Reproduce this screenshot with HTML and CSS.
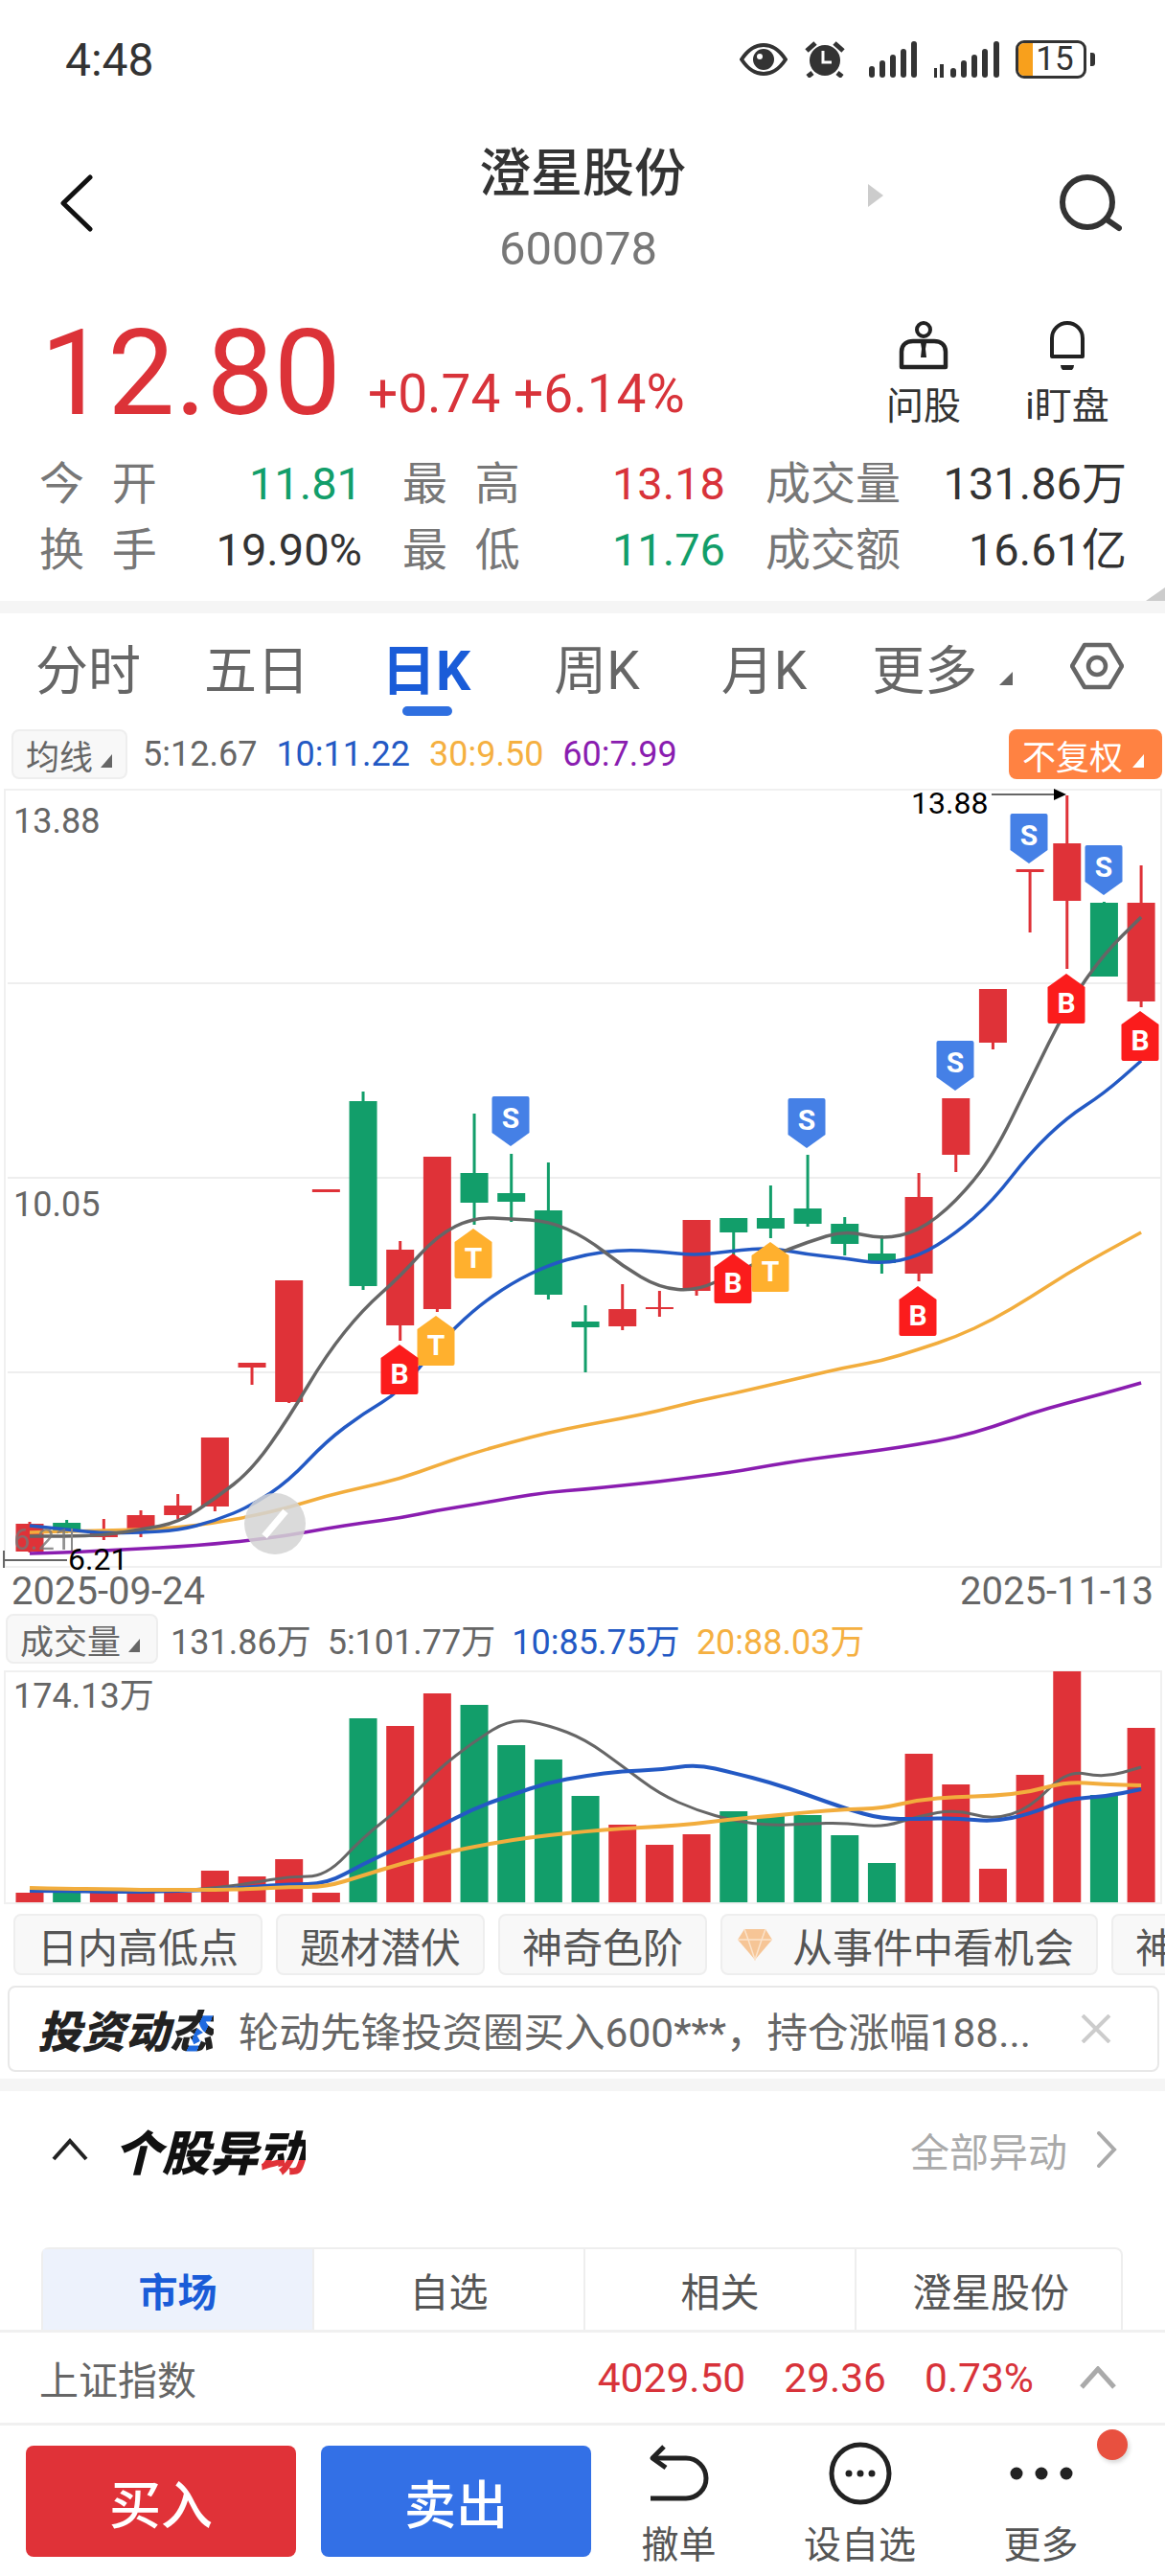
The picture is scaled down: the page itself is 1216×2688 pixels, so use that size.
FILE: index.html
```html
<!DOCTYPE html>
<html>
<head>
    <title>澄星股份 600078</title>
    <link rel="stylesheet" href="styles.css">
</head>
<body>
<div class="screen">
    <div class="status-bar">
        <span class="clock">4:48</span>
        <div class="status-icons">
            <svg width="50" height="34" viewBox="0 0 50 34"><path d="M2 17C10 5 17 2 25 2s15 3 23 15c-8 12-15 15-23 15S10 29 2 17z" fill="none" stroke="#333" stroke-width="4"/><circle cx="25" cy="17" r="11" fill="#333"/><circle cx="21" cy="14" r="3" fill="#fff"/></svg>
            <svg class="alarm" width="42" height="38" viewBox="0 0 42 38"><circle cx="21" cy="20" r="16" fill="#333"/><path d="M19 10v12h9" fill="none" stroke="#fff" stroke-width="3"/><path d="M2 10l9-8M40 10l-9-8M8 33l-5 4M34 33l5 4" stroke="#333" stroke-width="5"/></svg>
            <svg class="signal" width="50" height="38" viewBox="0 0 50 38"><g fill="#333"><rect x="0" y="26" width="6" height="12" rx="3"/><rect x="11" y="20" width="6" height="18" rx="3"/><rect x="22" y="14" width="6" height="24" rx="3"/><rect x="33" y="8" width="6" height="30" rx="3"/><rect x="44" y="0" width="6" height="38" rx="3"/></g></svg>
            <svg class="signal" width="68" height="38" viewBox="0 0 68 38"><g fill="#333"><rect x="0" y="28" width="3" height="10"/><rect x="6" y="24" width="4" height="14"/><rect x="17" y="28" width="6" height="10" rx="3"/><rect x="28" y="20" width="6" height="18" rx="3"/><rect x="39" y="14" width="6" height="24" rx="3"/><rect x="50" y="8" width="6" height="30" rx="3"/><rect x="62" y="0" width="6" height="38" rx="3"/></g></svg>
            <div class="battery"><span class="battery-level"></span><span class="battery-num">15</span></div>
            <span class="battery-nub"></span>
        </div>
    </div>

    <div class="stock-header">
        <svg class="back-icon" width="35" height="60" viewBox="0 0 35 60"><path d="M32 3L4 30l28 27" fill="none" stroke="#111" stroke-width="5" stroke-linecap="round" stroke-linejoin="round"/></svg>
        <div class="stock-title">
            <div class="stock-name">澄星股份</div>
            <div class="stock-code">600078</div>
        </div>
        <div class="header-right">
            <span class="next-arrow"></span>
            <svg class="search-icon" width="66" height="60" viewBox="0 0 66 60"><circle cx="30" cy="29" r="26" fill="none" stroke="#333" stroke-width="6"/><path d="M50 47l13 9" stroke="#333" stroke-width="6" stroke-linecap="round"/></svg>
        </div>
    </div>

    <div class="quote">
        <div class="price">12.80</div>
        <div class="change">+0.74 +6.14%</div>
        <div class="quote-actions">
            <div class="quote-action">
                <svg width="52" height="51" viewBox="0 0 52 51"><circle cx="26" cy="9" r="7" fill="none" stroke="#222" stroke-width="4"/><path d="M3 48V32c0-8 6-11 12-11h22c6 0 12 3 12 11v16z" fill="none" stroke="#222" stroke-width="4.5" stroke-linejoin="round"/><path d="M3 46h46v4H3z" fill="#222"/><path d="M23 23h6l-1 6 1 9h-6l1-9z" fill="#222"/></svg>
                <span>问股</span>
            </div>
            <div class="quote-action">
                <svg width="40" height="51" viewBox="0 0 40 51"><path d="M4 37V18a16 16 0 0 1 32 0v19z" fill="none" stroke="#222" stroke-width="4" stroke-linejoin="round"/><path d="M13 46a7 7 0 0 0 14 0z" fill="#222"/></svg>
                <span>i盯盘</span>
            </div>
        </div>
    </div>

    <div class="stats">
        <div class="stat"><span class="stat-label">今 开</span><span class="green">11.81</span></div>
        <div class="stat"><span class="stat-label">最 高</span><span class="red">13.18</span></div>
        <div class="stat"><span class="stat-label">成交量</span><span>131.86万</span></div>
        <div class="stat"><span class="stat-label">换 手</span><span>19.90%</span></div>
        <div class="stat"><span class="stat-label">最 低</span><span class="green">11.76</span></div>
        <div class="stat"><span class="stat-label">成交额</span><span>16.61亿</span></div>
        <span class="corner-mark"></span>
    </div>
    <div class="band"></div>

    <div class="period-tabs">
        <span class="period">分时</span>
        <span class="period period-five">五日</span>
        <span class="period period-active">日K</span>
        <span class="period">周K</span>
        <span class="period">月K</span>
        <span class="period period-more">更多</span>
        <span class="more-arrow"></span>
        <svg class="hex-icon" width="56" height="50" viewBox="0 0 56 50"><path d="M15 3h26l13 22-13 22H15L2 25z" fill="none" stroke="#666" stroke-width="4.500" stroke-linejoin="round"/><circle cx="28" cy="25" r="9" fill="none" stroke="#666" stroke-width="4.500"/></svg>
    </div>

    <div class="legend-row">
        <div class="legend-box ma-box">均线<i class="tri"></i></div>
        <span>5:12.67</span>
        <span class="blue">10:11.22</span>
        <span class="orange">30:9.50</span>
        <span class="purple">60:7.99</span>
        <div class="adjust-btn">不复权<i class="tri tri-white"></i></div>
    </div>

    <svg class="chart-svg" width="1216" height="813" viewBox="0 823 1216 813">
        <g id="kGrid"></g>
        <text class="axis-text" x="14" y="869">13.88</text>
        <text class="axis-text" x="14" y="1269">10.05</text>
        <g id="kCandles"></g>
        <g id="kLines"></g>
        <g id="kMarkers"></g>
        <circle cx="287" cy="1590" r="32" fill="#d4d4d4" opacity="0.85"/>
        <path d="M276 1603l22-26" stroke="#fff" stroke-width="7"/>
        <text class="ghost-text" x="14" y="1617">6.21</text>
        <path d="M75 1595v23" stroke="#888" stroke-width="2"/>
        <path d="M4 1628h66M4 1618v18" stroke="#666" stroke-width="2"/>
        <text class="mark-text" x="71" y="1638">6.21</text>
        <text class="mark-text" x="951" y="849">13.88</text>
        <path d="M1035 829h66" stroke="#666" stroke-width="2"/>
        <path d="M1100 823l13 6-13 6z" fill="#000"/>
    </svg>

    <div class="date-row"><span>2025-09-24</span><span>2025-11-13</span></div>

    <div class="legend-row vol-legend">
        <div class="legend-box vol-box">成交量<i class="tri"></i></div>
        <span>131.86万</span>
        <span>5:101.77万</span>
        <span class="blue">10:85.75万</span>
        <span class="orange">20:88.03万</span>
    </div>

    <svg class="vol-svg" width="1216" height="244" viewBox="0 1743 1216 244">
        <rect x="5" y="1744" width="1207" height="242" fill="none" stroke="#f0f0f0" stroke-width="2"/>
        <g id="volBars"></g>
        <g id="volLines"></g>
        <text class="axis-text" x="14" y="1782">174.13万</text>
    </svg>

    <div class="chips">
        <span class="chip">日内高低点</span>
        <span class="chip">题材潜伏</span>
        <span class="chip">神奇色阶</span>
        <span class="chip">
            <svg width="38" height="34" viewBox="0 0 38 34"><path d="M8 1h22l7 11-18 21L1 12z" fill="#f6c596"/><path d="M1 12h36M12 12l7 21 7-21M8 1l4 11M30 1l-4 11" fill="none" stroke="#fbe3cb" stroke-width="1.5"/></svg>
            从事件中看机会
        </span>
        <span class="chip">神奇九转</span>
    </div>

    <div class="news">
        <span class="news-logo">投资动<span class="accent-blue">态</span></span>
        <span class="news-text">轮动先锋投资圈买入600***，持仓涨幅188...</span>
        <svg class="news-close" width="32" height="30" viewBox="0 0 32 30"><path d="M2 1l28 28M30 1L2 29" stroke="#ccc" stroke-width="4"/></svg>
    </div>
    <div class="band band-thin"></div>

    <div class="section-head">
        <svg width="38" height="24" viewBox="0 0 38 24"><path d="M2 22L19 3l17 19" fill="none" stroke="#222" stroke-width="4"/></svg>
        <span class="section-title">个股异<span class="accent-red">动</span></span>
        <span class="section-link">全部异动</span>
        <svg width="22" height="38" viewBox="0 0 22 38"><path d="M3 2l16 17L3 36" fill="none" stroke="#aaa" stroke-width="4" stroke-linecap="round"/></svg>
    </div>

    <div class="news-tabs">
        <span class="news-tab news-tab-active">市场</span>
        <span class="news-tab">自选</span>
        <span class="news-tab">相关</span>
        <span class="news-tab">澄星股份</span>
    </div>

    <div class="index-row">
        <span class="index-name">上证指数</span>
        <span class="red index-val">4029.50</span>
        <span class="red index-val">29.36</span>
        <span class="red index-val">0.73%</span>
        <svg width="38" height="24" viewBox="0 0 38 24"><path d="M2 22L19 3l17 19" fill="none" stroke="#aaa" stroke-width="5"/></svg>
    </div>

    <div class="bottom-bar">
        <div class="trade-btn buy-btn">买入</div>
        <div class="trade-btn sell-btn">卖出</div>
        <div class="bar-actions">
            <div class="bar-action">
                <svg width="64" height="60" viewBox="0 0 64 60"><path d="M16 2L4 14l14 10" fill="none" stroke="#222" stroke-width="5" stroke-linejoin="round"/><path d="M5 14h34a20 20 0 0 1 0 42H2" fill="none" stroke="#222" stroke-width="5"/></svg>
                <span>撤单</span>
            </div>
            <div class="bar-action">
                <svg width="66" height="66" viewBox="0 0 66 66"><circle cx="33" cy="33" r="30" fill="none" stroke="#222" stroke-width="5"/><circle cx="21" cy="33" r="3.5" fill="#222"/><circle cx="33" cy="33" r="3.5" fill="#222"/><circle cx="45" cy="33" r="3.5" fill="#222"/></svg>
                <span>设自选</span>
            </div>
            <div class="bar-action">
                <svg width="66" height="66" viewBox="0 0 66 66"><circle cx="7" cy="33" r="6.5" fill="#222"/><circle cx="33" cy="33" r="6.5" fill="#222"/><circle cx="59" cy="33" r="6.5" fill="#222"/></svg>
                <span>更多</span>
                <i class="red-dot"></i>
            </div>
        </div>
    </div>
</div>
<script src="chart.js"></script>
</body>
</html>
```

FILE: styles.css
```css
* {
    box-sizing: border-box;
}

body {
    margin: 0;
    background-color: #ffffff;
    font-family: Roboto, "Noto Sans CJK SC", sans-serif;
    color: #333;
}

.screen {
    width: 1216px;
    height: 2688px;
    overflow: hidden;
}

.red { color: #d8333a; }
.green { color: #129e6a; }
.blue { color: #2359c4; }
.orange { color: #f5b041; }
.purple { color: #8a1db0; }

/* status bar */
.status-bar {
    height: 124px;
    padding: 0 73px 0 68px;
    display: flex;
    align-items: center;
    justify-content: space-between;
}

.clock {
    font-size: 48px;
}

.status-icons {
    display: flex;
    align-items: center;
}

.status-icons svg {
    margin-right: 18px;
}

.status-icons .alarm {
    margin-right: 25px;
}

.battery {
    width: 74px;
    height: 40px;
    border: 3px solid #333;
    border-radius: 9px;
    position: relative;
    text-align: center;
    line-height: 34px;
    font-size: 35px;
    overflow: hidden;
    margin-left: -1px;
}

.battery-level {
    position: absolute;
    left: 0;
    top: 0;
    bottom: 0;
    width: 15px;
    background-color: #f8a01c;
}

.battery-num {
    position: relative;
    margin-left: 8px;
}

.battery-nub {
    width: 5px;
    height: 14px;
    background-color: #333;
    margin-left: 4px;
    border-radius: 0 3px 3px 0;
}

/* stock header */
.stock-header {
    height: 196px;
    padding: 0 45px;
    display: grid;
    grid-template-columns: 1fr 300px 1fr;
}

.back-icon {
    margin: 58px 0 0 17px;
}

.stock-title {
    padding-top: 28px;
    text-align: center;
}

.stock-name {
    font-size: 54px;
    line-height: 60px;
    font-weight: 500;
}

.stock-code {
    margin: 20px 9px 0 0;
    font-size: 49px;
    line-height: 56px;
    color: #777;
}

.header-right {
    position: relative;
    display: flex;
    align-items: flex-start;
    justify-content: flex-end;
    padding-top: 58px;
}

.next-arrow {
    position: absolute;
    left: 148px;
    top: 68px;
    border-left: 16px solid #ccc;
    border-top: 12px solid transparent;
    border-bottom: 12px solid transparent;
}

/* quote */
.quote {
    height: 150px;
    padding: 0 42px 0 42px;
    display: flex;
}

.price {
    font-size: 125px;
    line-height: 140px;
    color: #dc3238;
    height: 140px;
}

.change {
    margin: 63px 0 0 28px;
    font-size: 55px;
    line-height: 56px;
    color: #d8333a;
}

.quote-actions {
    margin-left: auto;
    display: flex;
    gap: 30px;
    padding-top: 15px;
}

.quote-action {
    width: 120px;
    display: flex;
    flex-direction: column;
    align-items: center;
}

.quote-action span {
    margin-top: 16px;
    font-size: 39px;
    line-height: 44px;
}

/* stats */
.stats {
    position: relative;
    height: 157px;
    padding-left: 41px;
    display: grid;
    grid-template-columns: 337px 337px 377px;
    grid-auto-rows: 69px;
    column-gap: 42px;
    font-size: 47px;
    line-height: 69px;
}

.stat {
    display: flex;
    justify-content: space-between;
}

.stat-label {
    color: #777;
    font-size: 47px;
    word-spacing: 17px;
}

.corner-mark {
    position: absolute;
    right: 0;
    bottom: 0;
    border-right: 20px solid #ccc;
    border-top: 14px solid transparent;
}

.band {
    height: 13px;
    background-color: #f5f5f5;
}

/* period tabs */
.period-tabs {
    height: 121px;
    padding: 0 41px 11px 37px;
    display: flex;
    gap: 85px;
    align-items: center;
    position: relative;
    font-size: 55px;
    color: #666;
    white-space: nowrap;
}

.period {
    flex-shrink: 0;
}

.period-five {
    margin-left: -19px;
}

.period-more {
    margin-left: -17px;
}

.period-active {
    position: relative;
    margin: 0 2px 0 -10px;
    font-size: 57px;
    color: #1a5cd8;
    font-weight: 700;
}

.period-active::after {
    content: "";
    position: absolute;
    left: 22px;
    bottom: -11px;
    width: 52px;
    height: 10px;
    border-radius: 5px;
    background-color: #2f6fe0;
}

.more-arrow {
    margin-left: -62px;
    margin-top: 26px;
    border-right: 14px solid #666;
    border-top: 14px solid transparent;
}

.hex-icon {
    flex-shrink: 0;
    margin-left: -25px;
}

/* legend rows */
.legend-row {
    height: 52px;
    padding: 0 3px 0 12px;
    display: flex;
    align-items: center;
    gap: 20px;
    font-size: 36px;
    color: #666;
}

.legend-box {
    height: 52px;
    display: flex;
    align-items: center;
    gap: 8px;
    padding-left: 13px;
    background-color: #f8f8f8;
    border: 2px solid #eee;
    border-radius: 8px;
    font-size: 35px;
    margin-right: -4px;
}

.ma-box {
    width: 121px;
}

.vol-legend {
    padding-left: 6px;
    gap: 17px;
}

.vol-box {
    width: 159px;
}

.tri {
    border-right: 12px solid #666;
    border-top: 14px solid transparent;
    margin-top: 14px;
}

.tri-white {
    border-right-color: #fff;
}

.adjust-btn {
    margin-left: auto;
    width: 160px;
    height: 52px;
    padding-left: 14px;
    display: flex;
    align-items: center;
    gap: 10px;
    background-color: #ff8242;
    border-radius: 8px;
    color: #fff;
    font-size: 35px;
}

.chart-svg {
    display: block;
    margin-top: 10px;
    overflow: visible;
}

.vol-svg {
    display: block;
    margin-top: 7px;
}

.axis-text {
    font-size: 36px;
    fill: #666;
}

.mark-text {
    font-size: 32px;
    fill: #000;
}

.ghost-text {
    font-size: 31px;
    fill: #777;
    opacity: 0.8;
}

.marker-text {
    font-size: 30px;
    font-weight: 700;
    fill: #fff;
    text-anchor: middle;
}

.date-row {
    height: 48px;
    padding: 0 12px;
    display: flex;
    justify-content: space-between;
    align-items: center;
    font-size: 40px;
    color: #666;
}

/* chips */
.chips {
    margin-top: 10px;
    padding-left: 14px;
    display: flex;
    gap: 14px;
    overflow: hidden;
    white-space: nowrap;
}

.chip {
    height: 64px;
    padding: 0 23px;
    display: flex;
    flex-shrink: 0;
    align-items: center;
    gap: 20px;
    background-color: #f8f8f8;
    border: 2px solid #eee;
    border-radius: 8px;
    font-size: 42px;
    color: #555;
}

.chip svg {
    margin-left: -8px;
}

/* news strip */
.news {
    margin: 11px 6px 0 8px;
    height: 90px;
    padding: 0 48px 0 29px;
    display: flex;
    align-items: center;
    border: 2px solid #e8e8e8;
    border-radius: 8px;
}

.news-logo {
    font-size: 46px;
    font-weight: 900;
    font-style: italic;
    color: #222;
    white-space: nowrap;
}

.accent-blue {
    background: linear-gradient(115deg, #222 55%, #1f6ae0 55%, #1f6ae0 70%, #222 70%);
    -webkit-background-clip: text;
    color: transparent;
}

.accent-red {
    background: linear-gradient(180deg, #111 60%, #e03238 60%);
    -webkit-background-clip: text;
    color: transparent;
}

.news-text {
    margin-left: 26px;
    font-size: 42.5px;
    color: #666;
    white-space: nowrap;
}

.news-close {
    margin-left: auto;
}

.band-thin {
    margin-top: 7px;
}

/* section */
.section-head {
    height: 128px;
    padding: 0 50px 6px 54px;
    display: flex;
    align-items: center;
}

.section-title {
    margin-left: 27px;
    font-size: 50px;
    font-weight: 900;
    font-style: italic;
    color: #111;
}

.section-link {
    margin-left: auto;
    margin-right: 30px;
    font-size: 41px;
    color: #aaa;
}

.news-tabs {
    margin: 35px 44px 0 43px;
    height: 86px;
    display: grid;
    grid-template-columns: 281px 283px 283px 282px;
    border: 2px solid #eee;
    border-bottom: none;
    border-radius: 8px 8px 0 0;
}

.news-tab {
    display: flex;
    align-items: center;
    justify-content: center;
    font-size: 41px;
    color: #555;
    border-left: 2px solid #eee;
}

.news-tab-active {
    border-left: none;
    background-color: #edf2fc;
    color: #1a5cd8;
    font-weight: 700;
}

/* index row */
.index-row {
    height: 100px;
    padding: 0 51px 0 41px;
    display: flex;
    align-items: center;
    gap: 40px;
    border-top: 3px solid #f0f0f0;
    border-bottom: 3px solid #f0f0f0;
    font-size: 41px;
}

.index-name {
    margin-right: auto;
    color: #666;
}

.index-val {
    font-size: 42.5px;
}

.index-row svg {
    margin-left: 8px;
}

/* bottom bar */
.bottom-bar {
    height: 157px;
    padding: 21px 0 0 27px;
    display: flex;
    gap: 26px;
}

.trade-btn {
    width: 282px;
    height: 116px;
    display: flex;
    align-items: center;
    justify-content: center;
    border-radius: 8px;
    color: #fff;
    font-size: 54px;
    font-weight: 500;
}

.buy-btn {
    background-color: #e03238;
}

.sell-btn {
    background-color: #3370e6;
}

.bar-actions {
    margin-left: -29px;
    display: grid;
    grid-template-columns: repeat(3, 189px);
}

.bar-action {
    position: relative;
    display: flex;
    flex-direction: column;
    align-items: center;
    font-size: 39px;
    color: #555;
}

.bar-action svg {
    height: 66px;
    margin-top: -4px;
}

.bar-action span {
    position: absolute;
    top: 72px;
}

.red-dot {
    position: absolute;
    left: 153px;
    top: -17px;
    width: 32px;
    height: 32px;
    border-radius: 50%;
    background-color: #e8503f;
    box-shadow: 2px 3px 4px rgba(0, 0, 0, 0.15);
}
```

FILE: chart.js
```js
const SVG_NS = "http://www.w3.org/2000/svg";
const RED = "#df3238";
const GREEN = "#129e6a";

function xAt(i) {
    return 31 + i * 38.67;
}

function add(parent, tag, attrs, text) {
    const el = document.createElementNS(SVG_NS, tag);
    for (const key in attrs) {
        el.setAttribute(key, attrs[key]);
    }
    if (text) {
        el.textContent = text;
    }
    parent.appendChild(el);
    return el;
}

// smooth line through the points, one point per candle
function drawLine(parent, ys, color, width) {
    const pts = ys.map((y, i) => [xAt(i), y]);
    let d = "M" + pts[0][0] + " " + pts[0][1];
    for (let i = 1; i < pts.length - 1; i++) {
        const mx = (pts[i][0] + pts[i + 1][0]) / 2;
        const my = (pts[i][1] + pts[i + 1][1]) / 2;
        d += "Q" + pts[i][0] + " " + pts[i][1] + " " + mx + " " + my;
    }
    const last = pts[pts.length - 1];
    d += "L" + last[0] + " " + last[1];
    add(parent, "path", { d: d, fill: "none", stroke: color, "stroke-width": width, "stroke-linejoin": "round" });
}

// color, body top, body bottom, wick top, wick bottom
const candles = [
    ["r", 1590, 1619, 1588, 1620],
    ["g", 1589, 1598, 1586, 1600],
    ["r", 1598, 1604, 1585, 1607],
    ["r", 1581, 1597, 1576, 1604],
    ["r", 1571, 1581, 1559, 1585],
    ["r", 1500, 1572, 1500, 1577],
    ["r", 1422, 1427, 1422, 1445],
    ["r", 1336, 1463, 1336, 1464],
    ["r", 1241, 1244, 1241, 1244],
    ["g", 1149, 1342, 1139, 1346],
    ["r", 1304, 1383, 1295, 1399],
    ["r", 1207, 1366, 1207, 1369],
    ["g", 1224, 1255, 1162, 1278],
    ["g", 1245, 1254, 1204, 1275],
    ["g", 1263, 1351, 1213, 1356],
    ["g", 1379, 1385, 1362, 1432],
    ["r", 1366, 1384, 1340, 1388],
    ["r", 1364, 1366, 1347, 1374],
    ["r", 1273, 1347, 1273, 1352],
    ["g", 1271, 1286, 1271, 1311],
    ["g", 1271, 1282, 1237, 1292],
    ["g", 1261, 1277, 1205, 1280],
    ["g", 1277, 1298, 1270, 1310],
    ["g", 1308, 1318, 1289, 1329],
    ["r", 1249, 1329, 1224, 1337],
    ["r", 1146, 1205, 1146, 1223],
    ["r", 1032, 1088, 1032, 1095],
    ["r", 907, 910, 907, 973],
    ["r", 880, 940, 830, 1011],
    ["g", 942, 1019, 941, 1019],
    ["r", 942, 1045, 903, 1051]
];

const ma5 = [1603, 1603, 1602, 1596, 1589, 1564, 1534, 1479, 1414, 1366, 1332, 1289, 1270, 1272, 1274, 1291, 1321, 1344, 1347, 1329, 1311, 1296, 1284, 1293, 1285, 1254, 1207, 1128, 1050, 995, 957];
const ma10 = [1592, 1596, 1600, 1599, 1597, 1587, 1571, 1545, 1504, 1475, 1452, 1404, 1366, 1339, 1320, 1309, 1304, 1306, 1310, 1305, 1302, 1309, 1313, 1319, 1311, 1287, 1253, 1203, 1166, 1141, 1107];
const ma30 = [1599, 1598, 1597, 1596, 1594, 1589, 1582, 1573, 1561, 1552, 1543, 1529, 1516, 1505, 1495, 1487, 1480, 1472, 1462, 1454, 1445, 1436, 1427, 1420, 1408, 1395, 1377, 1354, 1329, 1307, 1286];
const ma60 = [1621, 1620, 1618, 1616, 1614, 1611, 1607, 1602, 1595, 1589, 1584, 1576, 1570, 1563, 1557, 1554, 1550, 1546, 1541, 1536, 1529, 1523, 1518, 1513, 1507, 1500, 1489, 1475, 1464, 1454, 1443];

// letter, center x, top y
const markers = [
    ["S", 1074, 849], ["S", 1152, 882], ["B", 1113, 1016], ["B", 1190, 1055],
    ["S", 997, 1086], ["S", 533, 1144], ["S", 842, 1146], ["T", 494, 1282],
    ["T", 455, 1373], ["B", 417, 1403], ["B", 765, 1308], ["T", 804, 1296],
    ["B", 958, 1342]
];
const markerColors = { S: "#4580e6", B: "#fb1c1c", T: "#ffb02e" };

const volTops = [1975, 1975, 1975, 1975, 1975, 1952, 1958, 1940, 1975, 1793, 1801, 1767, 1779, 1821, 1836, 1874, 1904, 1925, 1914, 1890, 1895, 1894, 1915, 1944, 1830, 1862, 1950, 1852, 1744, 1873, 1803];
const vol5 = [1973, 1973, 1973, 1973, 1973, 1970, 1965, 1958, 1958, 1917, 1887, 1847, 1817, 1793, 1800, 1815, 1843, 1872, 1889, 1900, 1905, 1903, 1902, 1907, 1895, 1888, 1899, 1887, 1847, 1855, 1844];
const vol10 = [1973, 1973, 1974, 1974, 1973, 1972, 1969, 1966, 1966, 1945, 1927, 1907, 1887, 1873, 1860, 1853, 1848, 1847, 1841, 1850, 1860, 1873, 1887, 1898, 1898, 1897, 1901, 1893, 1877, 1875, 1867];
const vol20 = [1970, 1971, 1971, 1972, 1972, 1972, 1971, 1969, 1969, 1957, 1945, 1935, 1927, 1920, 1915, 1911, 1908, 1906, 1903, 1898, 1895, 1891, 1888, 1887, 1878, 1875, 1874, 1870, 1859, 1862, 1863];

const grid = document.getElementById("kGrid");
add(grid, "rect", { x: 5, y: 824, width: 1207, height: 811, fill: "none", stroke: "#f0f0f0", "stroke-width": 2 });
[1026, 1229, 1432].forEach(function (y) {
    add(grid, "path", { d: "M8 " + y + "H1212", stroke: "#eeeeee", "stroke-width": 2 });
});

const candleGroup = document.getElementById("kCandles");
candles.forEach(function (c, i) {
    const color = c[0] === "r" ? RED : GREEN;
    const x = xAt(i);
    add(candleGroup, "rect", { x: x - 1.5, y: c[3], width: 3, height: c[4] - c[3], fill: color });
    add(candleGroup, "rect", { x: x - 14.5, y: c[1], width: 29, height: c[2] - c[1], fill: color });
});

const kLines = document.getElementById("kLines");
drawLine(kLines, ma60, "#8a1db0", 3.5);
drawLine(kLines, ma30, "#f2ad3d", 3.5);
drawLine(kLines, ma10, "#2359c4", 3.5);
drawLine(kLines, ma5, "#666666", 3.5);

const markerGroup = document.getElementById("kMarkers");
markers.forEach(function (m) {
    const x = m[1];
    const y = m[2];
    // S points down, B and T point up
    const d = m[0] === "S"
        ? "M" + (x - 19.5) + " " + (y + 2) + "q0-2 2-2h35q2 0 2 2v36l-19.500 14-19.500-14z"
        : "M" + (x - 19.500) + " " + (y + 50) + "q0 2 2 2h35q2 0 2-2v-36l-19.500-14-19.500 14z";
    add(markerGroup, "path", { d: d, fill: markerColors[m[0]] });
    const textY = m[0] === "S" ? y + 33 : y + 41;
    add(markerGroup, "text", { x: x, y: textY, "class": "marker-text" }, m[0]);
});

const bars = document.getElementById("volBars");
volTops.forEach(function (top, i) {
    add(bars, "rect", { x: xAt(i) - 14.5, y: top, width: 29, height: 1985 - top, fill: candles[i][0] === "r" ? RED : GREEN });
});

const volLines = document.getElementById("volLines");
drawLine(volLines, vol5, "#666666", 3);
drawLine(volLines, vol10, "#2359c4", 4);
drawLine(volLines, vol20, "#f2ad3d", 4);
```
